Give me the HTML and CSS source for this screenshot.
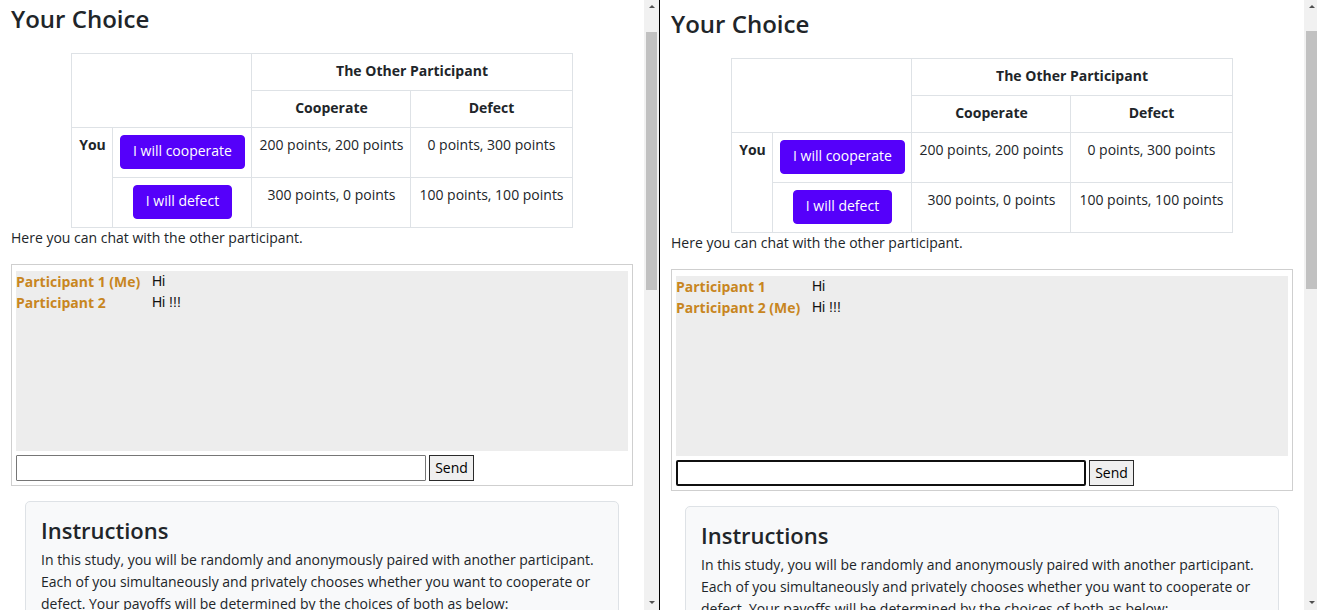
FILE: index.html
```html
<!DOCTYPE html>
<html lang="en">
<head>
<meta charset="utf-8">
<title>Prisoner's Dilemma Chat</title>
<link rel="stylesheet" href="styles.css">
</head>
<body>
<div class="screen">
  <section class="frame">
    <div class="page">
      <h2 class="title">Your Choice</h2>
      <table class="matrix">
        <colgroup><col class="c1"><col class="c2"><col class="c3"><col class="c4"></colgroup>
        <tr><th rowspan="2" colspan="2"></th><th colspan="2">The Other Participant</th></tr>
        <tr><th>Cooperate</th><th>Defect</th></tr>
        <tr><th rowspan="2" class="you">You</th><td><button class="choice">I will cooperate</button></td><td>200 points, 200 points</td><td>0 points, 300 points</td></tr>
        <tr><td><button class="choice">I will defect</button></td><td>300 points, 0 points</td><td>100 points, 100 points</td></tr>
      </table>
      <p class="chat-intro">Here you can chat with the other participant.</p>
      <div class="chat">
        <div class="messages">
          <div class="msg"><span class="who">Participant 1 (Me)</span><span class="text">Hi</span></div>
          <div class="msg"><span class="who">Participant 2</span><span class="text">Hi !!!</span></div>
        </div>
        <div class="compose"><input class="compose-input" type="text"><button class="send">Send</button></div>
      </div>
      <div class="card">
        <h3 class="card-title">Instructions</h3>
        <p class="card-text">In this study, you will be randomly and anonymously paired with another participant.<br>Each of you simultaneously and privately chooses whether you want to cooperate or<br>defect. Your payoffs will be determined by the choices of both as below:</p>
      </div>
    </div>
    <div class="scrollbar"><span class="arrow arrow-up"></span><div class="thumb"></div><span class="arrow arrow-down"></span></div>
  </section>
  <div class="divider"></div>
  <section class="frame frame-right">
    <div class="page">
      <h2 class="title">Your Choice</h2>
      <table class="matrix">
        <colgroup><col class="c1"><col class="c2"><col class="c3"><col class="c4"></colgroup>
        <tr><th rowspan="2" colspan="2"></th><th colspan="2">The Other Participant</th></tr>
        <tr><th>Cooperate</th><th>Defect</th></tr>
        <tr><th rowspan="2" class="you">You</th><td><button class="choice">I will cooperate</button></td><td>200 points, 200 points</td><td>0 points, 300 points</td></tr>
        <tr><td><button class="choice">I will defect</button></td><td>300 points, 0 points</td><td>100 points, 100 points</td></tr>
      </table>
      <p class="chat-intro">Here you can chat with the other participant.</p>
      <div class="chat">
        <div class="messages">
          <div class="msg"><span class="who">Participant 1</span><span class="text">Hi</span></div>
          <div class="msg"><span class="who">Participant 2 (Me)</span><span class="text">Hi !!!</span></div>
        </div>
        <div class="compose"><input class="compose-input is-focused" type="text"><button class="send">Send</button></div>
      </div>
      <div class="card">
        <h3 class="card-title">Instructions</h3>
        <p class="card-text">In this study, you will be randomly and anonymously paired with another participant.<br>Each of you simultaneously and privately chooses whether you want to cooperate or<br>defect. Your payoffs will be determined by the choices of both as below:</p>
      </div>
    </div>
    <div class="scrollbar"><span class="arrow arrow-up"></span><div class="thumb"></div><span class="arrow arrow-down"></span></div>
  </section>
</div>
</body>
</html>
```
FILE: styles.css
```css
* { box-sizing: border-box; }
html, body { margin: 0; height: 100%; }
body {
  overflow: hidden;
  background: #fff;
  font-family: "Open Sans", "Noto Sans", sans-serif;
  font-size: 14px;
  color: #212529;
}
.screen { display: flex; width: 1317px; height: 610px; overflow: hidden; }
.frame { flex: 0 0 659px; display: flex; height: 610px; overflow: hidden; }
.page { flex: 0 0 644px; padding: 4px 11px 0; overflow: hidden; }
.frame-right .page { padding-top: 9px; }
.divider { flex: 0 0 1px; background: #000; }

.scrollbar {
  flex: 0 0 15px;
  background: #f1f1f1;
  display: flex;
  flex-direction: column;
  align-items: center;
}
.arrow { width: 0; height: 0; border-left: 3.5px solid transparent; border-right: 3.5px solid transparent; }
.arrow-up { margin-top: 5px; border-bottom: 3.5px solid #505050; }
.arrow-down { margin-top: auto; margin-bottom: 6px; border-top: 3.5px solid #505050; }
.thumb { width: 11px; height: 258px; margin-top: 24px; background: #c1c1c1; }
.frame-right .thumb { margin-top: 23px; }

.title { font-size: 24px; font-weight: 600; line-height: 30px; margin: 0 0 19px; }

.matrix { border-collapse: collapse; margin: 0 auto; table-layout: fixed; width: 500px; }
.c1 { width: 41px; }
.c2 { width: 139px; }
.c3 { width: 159px; }
.c4 { width: 161px; }
.matrix th, .matrix td {
  border: 1px solid #dee2e6;
  padding: 7px 4px 9px;
  line-height: 20px;
  text-align: center;
  vertical-align: top;
  white-space: nowrap;
}
.matrix th { font-weight: 700; }
.matrix td, .matrix .you { padding-top: 7px; padding-bottom: 8px; }
.choice {
  display: inline-block;
  vertical-align: top;
  font: inherit;
  font-size: 14px;
  line-height: 20px;
  padding: 5px 12px 7px;
  color: #fff;
  background: #5500fa;
  border: 1px solid #5500fa;
  border-radius: 4px;
}

.chat-intro { margin: 0 0 16px; line-height: 20px; }

.chat { border: 1px solid #cfcfcf; padding: 6px 4px 4px; }
.messages { height: 180px; background: #ededed; }
.msg { display: flex; line-height: 21px; }
.who { flex: 0 0 136px; font-weight: 700; color: #c8861f; }
.text { font-family: "Liberation Sans", Arial, sans-serif; font-size: 14px; color: #111; }
.compose { display: flex; gap: 3px; margin-top: 4px; }
.compose-input {
  width: 410px;
  height: 26px;
  border: 1px solid #767676;
  border-radius: 1px;
  background: #fff;
  padding: 1px 2px;
  font: inherit;
}
.compose-input.is-focused { border: 2px solid #101010; border-radius: 2px; }
.send {
  width: 45px;
  height: 26px;
  padding: 0 0 2px;
  font: inherit;
  font-size: 14px;
  color: #000;
  background: #efefef;
  border: 1px solid #2a2a2a;
  border-radius: 0;
}

.card {
  margin: 15px 14px 0;
  border: 1px solid #dee2e6;
  border-radius: 5px;
  background: #f8f9fa;
  padding: 14px 15px 15px;
}
.card-title { font-size: 22px; font-weight: 600; line-height: 28px; margin: 0 0 5px; }
.card-text { margin: 0; line-height: 22px; white-space: nowrap; }
```
